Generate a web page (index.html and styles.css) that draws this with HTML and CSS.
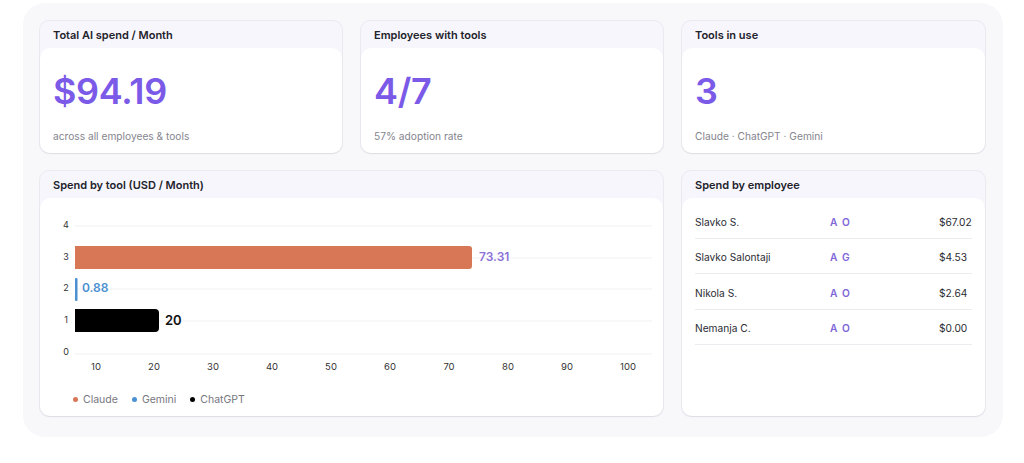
FILE: index.html
```html
<!DOCTYPE html>
<html lang="en">
<head>
    <meta charset="UTF-8">
    <meta name="viewport" content="width=device-width, initial-scale=1.0">
    <title>AI Spend</title>
    <link rel="stylesheet" href="styles.css">
</head>
<body>
    <div class="panel">
        <!-- Stat cards -->
        <div class="card">
            <div class="card-head">Total AI spend / Month</div>
            <div class="card-body stat">
                <div class="stat-value">$94.19</div>
                <div class="stat-sub">across all employees &amp; tools</div>
            </div>
        </div>
        <div class="card">
            <div class="card-head">Employees with tools</div>
            <div class="card-body stat">
                <div class="stat-value">4/7</div>
                <div class="stat-sub">57% adoption rate</div>
            </div>
        </div>
        <div class="card">
            <div class="card-head">Tools in use</div>
            <div class="card-body stat">
                <div class="stat-value">3</div>
                <div class="stat-sub">Claude · ChatGPT · Gemini</div>
            </div>
        </div>

        <!-- Chart -->
        <div class="card wide">
            <div class="card-head">Spend by tool (USD / Month)</div>
            <div class="card-body chart">
                <svg class="chart-svg" width="624" height="186" viewBox="0 0 624 186">
                    <g class="grid">
                        <line x1="35" y1="28" x2="612" y2="28"/>
                        <line x1="35" y1="60" x2="612" y2="60"/>
                        <line x1="35" y1="91" x2="612" y2="91"/>
                        <line x1="35" y1="123" x2="612" y2="123"/>
                        <line x1="35" y1="156" x2="612" y2="156"/>
                    </g>
                    <g class="ylabels">
                        <text x="26" y="28">4</text>
                        <text x="26" y="60">3</text>
                        <text x="26" y="91">2</text>
                        <text x="26" y="123">1</text>
                        <text x="26" y="155">0</text>
                    </g>
                    <path d="M35 48 H429 a3 3 0 0 1 3 3 V68 a3 3 0 0 1 -3 3 H35 Z" fill="#d77756"/>
                    <text class="val val-claude" x="439" y="60">73.31</text>
                    <rect x="35" y="80" width="2.5" height="23" rx="1" fill="#4a90d2"/>
                    <text class="val val-gemini" x="42" y="91">0.88</text>
                    <path d="M35 111 H115 a4 4 0 0 1 4 4 V130 a4 4 0 0 1 -4 4 H35 Z" fill="#000"/>
                    <text class="val val-gpt" x="125" y="123">20</text>
                    <g class="xlabels">
                        <text x="56" y="169">10</text>
                        <text x="114" y="169">20</text>
                        <text x="173" y="169">30</text>
                        <text x="232" y="169">40</text>
                        <text x="291" y="169">50</text>
                        <text x="350" y="169">60</text>
                        <text x="409" y="169">70</text>
                        <text x="468" y="169">80</text>
                        <text x="527" y="169">90</text>
                        <text x="588" y="169">100</text>
                    </g>
                </svg>
                <div class="legend">
                    <span class="legend-item"><i class="dot claude"></i>Claude</span>
                    <span class="legend-item"><i class="dot gemini"></i>Gemini</span>
                    <span class="legend-item"><i class="dot gpt"></i>ChatGPT</span>
                </div>
            </div>
        </div>

        <!-- Employees -->
        <div class="card">
            <div class="card-head">Spend by employee</div>
            <div class="card-body emp">
                <div class="emp-row">
                    <span class="emp-name">Slavko S.</span>
                    <span class="emp-tools">A O</span>
                    <span class="emp-amount">$67.02</span>
                </div>
                <div class="emp-row">
                    <span class="emp-name">Slavko Salontaji</span>
                    <span class="emp-tools">A G</span>
                    <span class="emp-amount">$4.53</span>
                </div>
                <div class="emp-row">
                    <span class="emp-name">Nikola S.</span>
                    <span class="emp-tools">A O</span>
                    <span class="emp-amount">$2.64</span>
                </div>
                <div class="emp-row">
                    <span class="emp-name">Nemanja C.</span>
                    <span class="emp-tools">A O</span>
                    <span class="emp-amount">$0.00</span>
                </div>
            </div>
        </div>
    </div>
</body>
</html>
```

FILE: styles.css
```css
* {
    margin: 0;
    padding: 0;
    box-sizing: border-box;
}
body {
    background: #fff;
    font-family: Inter, "Noto Sans", sans-serif;
    color: #1f1f27;
}
.panel {
    margin: 3px 0 0 23px;
    width: 980px;
    height: 434px;
    padding: 17px 16px 17px 16px;
    background: #f8f7fa;
    border-radius: 22px;
    display: grid;
    grid-template-columns: 304px 304px 305px;
    grid-template-rows: 134px 247px;
    column-gap: 17px;
    row-gap: 16px;
}
.card {
    display: flex;
    flex-direction: column;
    background: #f7f6fc;
    border: 1px solid #ebeaf1;
    border-radius: 10px;
}
.wide {
    grid-column: span 2;
}
.card-head {
    height: 27px;
    padding: 0 13px;
    display: flex;
    align-items: center;
    font-size: 11px;
    font-weight: 600;
    color: #22222a;
}
.card-body {
    flex: 1;
    background: #fff;
    border-radius: 10px;
    box-shadow: 0 1px 2px rgba(0, 0, 0, 0.06);
}
.stat {
    padding: 21px 13px 0;
}
.stat-value {
    font-size: 36px;
    line-height: 44px;
    font-weight: 600;
    color: #7b5ae8;
    letter-spacing: -0.3px;
}
.stat-sub {
    margin-top: 17px;
    font-size: 10.2px;
    color: #85858e;
}
.chart {
    display: flex;
    flex-direction: column;
}
.chart-svg {
    display: block;
}
.grid line {
    stroke: #f1f1f4;
    stroke-width: 1;
}
.ylabels text {
    font-size: 9px;
    fill: #333;
    text-anchor: middle;
    dominant-baseline: middle;
}
.xlabels text {
    font-size: 9.5px;
    fill: #333;
    text-anchor: middle;
    dominant-baseline: middle;
}
.val {
    dominant-baseline: middle;
    font-weight: 600;
}
.val-claude {
    font-size: 12px;
    fill: #8a72d8;
}
.val-gemini {
    font-size: 12px;
    fill: #4a90d2;
}
.val-gpt {
    font-size: 13px;
    fill: #111;
}
.legend {
    display: flex;
    gap: 14px;
    padding: 9px 0 0 33px;
    font-size: 10.5px;
    color: #76767e;
}
.legend-item {
    display: flex;
    align-items: center;
    gap: 5px;
}
.dot {
    width: 5px;
    height: 5px;
    border-radius: 50%;
}
.dot.claude { background: #d77756; }
.dot.gemini { background: #4a90d2; }
.dot.gpt { background: #000; }
.emp {
    padding: 5px 13px 0;
}
.emp-row {
    display: grid;
    grid-template-columns: 135px 109px 1fr;
    align-items: center;
    height: 35.5px;
    padding-top: 3px;
    border-bottom: 1px solid #ececf0;
    font-size: 10.2px;
    color: #2b2b33;
}
.emp-tools {
    color: #7e66d8;
    font-weight: 600;
    letter-spacing: 1px;
}
```
